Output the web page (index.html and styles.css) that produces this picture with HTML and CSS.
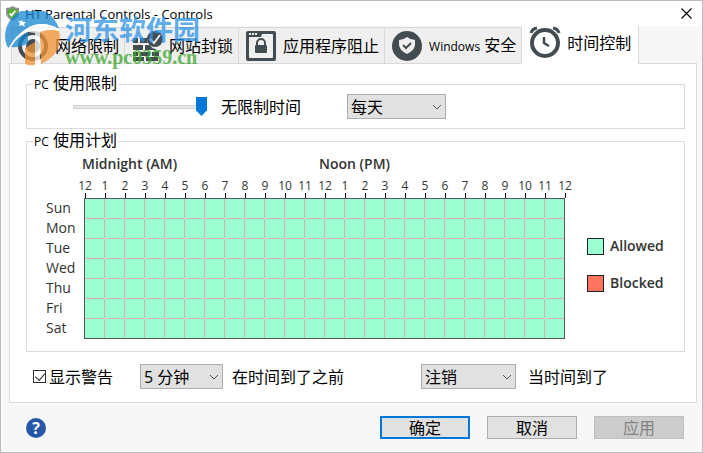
FILE: index.html
```
<!DOCTYPE html>
<html lang="zh">
    <head>
        <meta charset="utf-8"/>
        <title>HT Parental Controls - Controls</title>
        <link rel="stylesheet" href="styles.css">
    </head>
    <body>
        <div class="window">
            <div class="titlebar">
                <svg class="shield" viewBox="0 0 14 16">
                    <path d="M7 0 Q10 2 14 2 V8 Q13 13 7 16 Q1 13 0 8 V2 Q4 2 7 0Z" fill="#8b9490"/>
                    <path d="M7 2 Q9 3 12 4 V8 Q11 12 7 14 Q3 12 2 8 V4 Q5 3 7 2Z" fill="#58ad34"/>
                    <path d="M4 8 L6 10 L10 5" fill="none" stroke="#fff" stroke-width="2"/>
                </svg>
                <span class="title">HT Parental Controls - Controls</span>
                <button class="close" aria-label="关闭">
                    <svg width="11" height="11" viewBox="0 0 11 11"><path d="M.5 .5 L10.5 10.5 M10.5 .5 L.5 10.5" stroke="#000" stroke-width="1.1"/></svg>
                </button>
            </div>

            <div class="tabs" role="tablist">
                <button class="tab" role="tab">
                    <svg class="tab_icon" viewBox="0 0 30 30">
                        <circle cx="15" cy="15" r="13" fill="none" stroke="#434c50" stroke-width="4"/>
                        <circle cx="15" cy="15" r="7" fill="#434c50"/>
                    </svg>
                    网络限制
                </button>
                <button class="tab" role="tab">
                    <svg class="tab_icon" viewBox="0 0 30 30">
                        <g fill="#434c50">
                            <path d="M1 7h5v5H1z M8 7h7q0 3 1 5H8z M1 14h10v5H1z M13 14h5q2 4 6 4v1H13z M1 21h5v4H1z M8 21h10v4H8z M20 21h7v4h-7z M1 26h11v4H1z M14 26h12v4H14z"/>
                            <circle cx="23" cy="8" r="8"/>
                        </g>
                        <path d="M18 8 L22 12 L28 4" fill="none" stroke="#eee" stroke-width="2"/>
                    </svg>
                    网站封锁
                </button>
                <button class="tab" role="tab">
                    <svg class="tab_icon" viewBox="0 0 30 30">
                        <path fill="#434c50" fill-rule="evenodd" d="M2 0h26q2 0 2 2v26q0 2-2 2H2q-2 0-2-2V2Q0 0 2 0z M3 6v20q0 1 1 1h22q1 0 1-1V4q0-1-1-1H16l-1 3z"/>
                        <path d="M3 2h2v2H3z M6 2h2v2H6z M9 2h2v2H9z" fill="#eee"/>
                        <rect x="9" y="14" width="12" height="8" rx="1" fill="#434c50"/>
                        <path d="M11 14v-2a4 4 0 0 1 8 0v2" fill="none" stroke="#434c50" stroke-width="2"/>
                    </svg>
                    应用程序阻止
                </button>
                <button class="tab" role="tab">
                    <svg class="tab_icon" viewBox="0 0 30 30">
                        <circle cx="15" cy="15" r="15" fill="#434c50"/>
                        <path d="M15 6 Q19 9 23 9 V14 Q22 20 15 23 Q8 20 7 14 V9 Q11 9 15 6Z" fill="#eee"/>
                        <path d="M11 14 L14 17 L19 12" fill="none" stroke="#434c50" stroke-width="2"/>
                    </svg>
                    <span><span class="latin">Windows</span> 安全</span>
                </button>
                <button class="tab tab_active" role="tab" aria-selected="true">
                    <svg class="tab_icon" viewBox="0 0 30 30">
                        <circle cx="15" cy="15" r="13" fill="none" stroke="#434c50" stroke-width="4"/>
                        <path d="M14 9v6l5 3" fill="none" stroke="#434c50" stroke-width="2.5"/>
                        <path d="M1 5q1-4 6-5 M29 5q-1-4-6-5" fill="none" stroke="#434c50" stroke-width="3"/>
                    </svg>
                    时间控制
                </button>
            </div>

            <div class="panel">
                <fieldset class="group">
                    <legend><span class="latin">PC</span> 使用限制</legend>
                    <div class="limit_row">
                        <input type="range" class="slider" id="limit" min="0" max="24" value="24">
                        <label class="limit_text" for="limit">无限制时间</label>
                        <span class="select_box select_day">
                            <select aria-label="每天"><option>每天</option></select>
                            <svg viewBox="0 0 10 6"><path d="M1 1 L5 5 L9 1"/></svg>
                        </span>
                    </div>
                </fieldset>

                <fieldset class="group">
                    <legend><span class="latin">PC</span> 使用计划</legend>
                    <div class="plan">
                        <div class="schedule">
                            <div class="halves"><span>Midnight (AM)</span><span>Noon (PM)</span></div>
                            <div class="hours" id="hours"></div>
                            <table class="grid" id="grid"></table>
                        </div>
                        <div class="keys">
                            <div class="key"><i class="swatch allowed"></i>Allowed</div>
                            <div class="key"><i class="swatch blocked"></i>Blocked</div>
                        </div>
                    </div>
                </fieldset>

                <div class="warn_row">
                    <label class="check"><input type="checkbox" checked>显示警告</label>
                    <span class="select_box select_minutes">
                        <select id="minutes"><option>5 分钟</option></select>
                        <svg viewBox="0 0 10 6"><path d="M1 1 L5 5 L9 1"/></svg>
                    </span>
                    <label class="before" for="minutes">在时间到了之前</label>
                    <span class="select_box select_action">
                        <select id="action"><option>注销</option></select>
                        <svg viewBox="0 0 10 6"><path d="M1 1 L5 5 L9 1"/></svg>
                    </span>
                    <label for="action">当时间到了</label>
                </div>
            </div>

            <div class="footer">
                <button class="help" aria-label="帮助">?</button>
                <button class="btn btn_default">确定</button>
                <button class="btn">取消</button>
                <button class="btn" disabled>应用</button>
            </div>

            <div class="watermark">
                <svg width="56" height="56" viewBox="0 0 56 56">
                    <path d="M1 32 A27 27 0 0 1 54 18 Q36 8 21 18 Q9 26 4 37 Q1 35 1 32Z" fill="#1586cf"/>
                    <path d="M6 36 Q12 25 23 21 V32 Q16 37 6 36Z" fill="#1586cf"/>
                    <path d="M35 21 Q46 17 54 20 Q59 42 36 53 Z" fill="#f39335"/>
                    <path d="M20 37 L30 31 V54 Q25 55 20 53Z" fill="#f39335"/>
                    <path d="M4 37 Q9 26 21 18 Q36 8 54 18 V20 Q44 17 35 21 V53 H30 V22 L23 21 Q12 25 6 36Z" fill="#fff"/>
                    <path d="M17 9 l1 2 3 0 -2 2 1 3 -3 -2 -3 1 1 -3 -2 -2 3 0z" fill="#fff"/>
                </svg>
                <div class="mark_text">
                    <div class="mark_name">河东软件园</div>
                    <div class="mark_site">www.pc0359.cn</div>
                </div>
            </div>
        </div>

    <script>
        var days = ['Sun', 'Mon', 'Tue', 'Wed', 'Thu', 'Fri', 'Sat'];
        var hours = '';
        for (var h = 0; h <= 24; h++) {
            hours += '<span>' + (h % 12 || 12) + '</span>';
        }
        document.getElementById('hours').innerHTML = hours;

        var rows = '';
        days.forEach(function(day) {
            rows += '<tr><th scope="row">' + day + '</th>' + '<td></td>'.repeat(24) + '</tr>';
        });
        document.getElementById('grid').innerHTML = rows;
    </script>
    </body>
</html>
```
FILE: styles.css
```
* {
    box-sizing: border-box;
}

body {
    margin: 0;
    font-family: "Open Sans", "Noto Sans CJK SC", sans-serif;
    font-size: 16px;
    line-height: 20px;
    color: #000;
}

button, select, input {
    font: inherit;
    color: inherit;
    margin: 0;
}

.window {
    position: relative;
    display: flex;
    flex-direction: column;
    min-height: 100vh;
    background-color: #f7f7f7;
    border: 1px solid #bdbdbd;
}

.latin {
    font-size: 12px;
}

/* title bar */
.titlebar {
    display: flex;
    align-items: center;
    height: 25px;
    padding: 0 10px 0 5px;
    background-color: #fff;
}
.shield {
    width: 13px;
    height: 15px;
}
.title {
    flex: 1;
    margin-left: 6px;
    font-size: 13px;
}
.close {
    display: flex;
    padding: 0;
    border: 0;
    background: none;
}

/* tabs */
.tabs {
    display: flex;
    height: 37px;
    padding-left: 10px;
}
.tab {
    display: flex;
    align-items: center;
    gap: 7px;
    height: 36px;
    margin-top: 1px;
    padding: 0 5px 0 7px;
    background-color: #efefef;
    border: solid #d9d9d9;
    border-width: 1px 1px 0 0;
    white-space: nowrap;
}
.tab:first-child {
    border-left-width: 1px;
    padding-left: 6px;
}
.tab_icon {
    width: 30px;
    height: 30px;
    overflow: visible;
}
.tab_active {
    position: relative;
    height: 38px;
    margin: 0 0 -1px;
    padding: 0 7px 4px 8px;
    background-color: #fff;
    border-top: 0;
}

/* tab page */
.panel {
    margin: 0 5px 0 8px;
    padding: 9px 11px 13px 16px;
    background-color: #fff;
    border: 1px solid #d9d9d9;
}
.group {
    margin: 0 0 1px;
    padding: 0;
    border: 1px solid #dcdcdc;
}
.group legend {
    margin-left: 6px;
    padding: 0 1px;
}
.limit_row {
    display: flex;
    align-items: center;
    height: 33px;
    padding: 0 0 10px 46px;
}

.slider {
    width: 134px;
    height: 19px;
    appearance: none;
    background: linear-gradient(#e5e8e7, #e5e8e7) center / calc(100% - 2px) 2px no-repeat, linear-gradient(#d0d3d2, #d0d3d2) center / 100% 4px no-repeat;
}
.slider::-webkit-slider-thumb {
    appearance: none;
    width: 11px;
    height: 19px;
    background-color: #0078d7;
    clip-path: polygon(0 0, 100% 0, 100% 70%, 50% 100%, 0 70%);
}
.limit_text {
    width: 126px;
    margin-left: 14px;
}

.select_box {
    position: relative;
    display: inline-block;
    height: 25px;
}
.select_box select {
    display: block;
    width: 100%;
    height: 25px;
    padding: 0 0 0 3px;
    appearance: none;
    background-color: #e1e1e1;
    border: 1px solid #adadad;
    border-radius: 0;
}
.select_box svg {
    position: absolute;
    right: 4px;
    top: 10px;
    width: 10px;
    height: 6px;
    fill: none;
    stroke: #555;
    pointer-events: none;
}
.select_day {
    width: 99px;
}
.select_minutes {
    width: 83px;
}
.select_action {
    width: 95px;
    margin-right: 12px;
}

/* weekly schedule */
.plan {
    display: flex;
    align-items: center;
    gap: 12px;
    padding: 2px 0 12px 19px;
    color: #333;
}
.halves {
    display: grid;
    grid-template-columns: 237px 1fr;
    padding-left: 36px;
    font-size: 14px;
    font-weight: 600;
}
.hours {
    display: flex;
    margin: 4px 0 0 29px;
    font-size: 12px;
}
.hours span {
    display: flex;
    flex-direction: column;
    align-items: center;
    width: 20px;
    line-height: 15px;
}
.hours span::after {
    content: "";
    width: 1px;
    height: 5px;
    background-color: #000;
}
.grid {
    border-spacing: 0;
    table-layout: fixed;
    width: 519px;
}
.grid th {
    width: 39px;
    height: 20px;
    padding: 0 0 2px;
    border-right: 1px solid #555;
    font-size: 14px;
    font-weight: normal;
    line-height: 18px;
    text-align: left;
}
/* grid lines with a light dot on every crossing */
.grid td {
    width: 20px;
    height: 20px;
    padding: 0;
    background:
        linear-gradient(#fff, #fff) right bottom / 1px 1px no-repeat,
        linear-gradient(#d3b3a6, #d3b3a6) right / 1px 100% no-repeat,
        linear-gradient(#d3b3a6, #d3b3a6) bottom / 100% 1px no-repeat,
        #9cffd3;
}
.grid tr:first-child td, .grid tr:first-child th {
    height: 21px;
}
.grid tr:first-child td {
    border-top: 1px solid #555;
}
.grid td:last-child {
    border-right: 1px solid #555;
    background:
        linear-gradient(#d3b3a6, #d3b3a6) bottom / 100% 1px no-repeat,
        #9cffd3;
}
.grid tr:last-child td {
    border-bottom: 1px solid #555;
    background:
        linear-gradient(#d3b3a6, #d3b3a6) right / 1px 100% no-repeat,
        #9cffd3;
}
.grid tr:last-child td:last-child {
    background: #9cffd3;
}

.keys {
    display: grid;
    gap: 17px;
    margin-top: 36px;
    font-size: 14px;
    font-weight: 600;
}
.key {
    display: flex;
    align-items: center;
    gap: 6px;
}
.swatch {
    width: 17px;
    height: 17px;
    border: 1px solid #222;
}
.allowed {
    background-color: #9cffd3;
}
.blocked {
    background-color: #ff7560;
}

.warn_row {
    display: flex;
    align-items: center;
    padding: 11px 0 0 7px;
}
.check {
    display: flex;
    align-items: center;
    gap: 3px;
    width: 107px;
}
.check input {
    position: relative;
    appearance: none;
    width: 13px;
    height: 13px;
    border: 1px solid #333;
    background-color: #fff;
}
.check input:checked::after {
    content: "";
    position: absolute;
    left: 3px;
    top: 0;
    width: 5px;
    height: 8px;
    border: solid #333;
    border-width: 0 1px 1px 0;
    transform: rotate(40deg);
}
.before {
    width: 198px;
    padding-left: 9px;
}

/* buttons */
.footer {
    display: flex;
    align-items: center;
    gap: 17px;
    padding: 13px 18px 12px 25px;
}
.help {
    width: 20px;
    height: 20px;
    margin-right: auto;
    padding: 0;
    border: 0;
    border-radius: 50%;
    background-color: #2458a6;
    color: #fff;
    font-size: 16px;
    font-weight: bold;
    line-height: 20px;
}
.btn {
    width: 90px;
    height: 23px;
    padding: 0;
    background-color: #e1e1e1;
    border: 1px solid #adadad;
    line-height: 20px;
}
.btn_default {
    border: 2px solid #0078d7;
}
.btn:disabled {
    background-color: #ccc;
    border-color: #bfbfbf;
    color: #838383;
}

/* site mark laid over the tabs */
.watermark {
    position: absolute;
    left: 4px;
    top: 10px;
    display: flex;
    gap: 4px;
    opacity: 0.75;
    pointer-events: none;
}
.mark_name {
    font-family: "Noto Sans CJK SC", sans-serif;
    font-size: 27px;
    font-weight: bold;
    line-height: 36px;
    color: #2d93e8;
}
.mark_site {
    font-family: "Liberation Serif", serif;
    font-size: 20px;
    font-weight: bold;
    color: #3aa52c;
}
```
